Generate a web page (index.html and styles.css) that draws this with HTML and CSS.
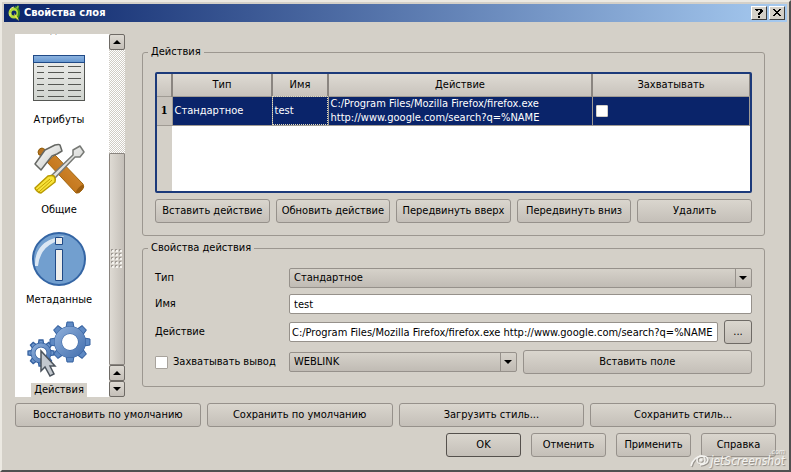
FILE: index.html
```html
<!DOCTYPE html>
<html lang="ru">
<head>
    <meta charset="UTF-8">
    <meta name="viewport" content="width=device-width, initial-scale=1.0">
    <title>Свойства слоя</title>
    <link rel="stylesheet" href="styles.css">
</head>
<body>
    <div class="window">
        <header class="titlebar">
            <svg class="logo" width="16" height="16" viewBox="0 0 16 16">
                <circle cx="6" cy="8" r="4" fill="none" stroke="#b5dc3c" stroke-width="3"/>
                <path d="M7 2q4 1 4 6q0 4-3 6" fill="none" stroke="#3f8a1e" stroke-width="2"/>
                <path d="M2 5q1-3 4-3M2 8v3" fill="none" stroke="#f3f08a" stroke-width="1"/>
                <path d="M8 3l2-3 1 2-2 2z" fill="#8cc63c"/>
                <path d="M6 8l4 5 1 3-4-4z" fill="#e9e04a"/>
            </svg>
            <h1>Свойства слоя</h1>
            <button class="title-button" aria-label="Справка">
                <svg width="10" height="10" viewBox="0 0 10 10" shape-rendering="crispEdges"><path d="M2 1h6v1h1v2h-1v1h-1v1h-1v1h-2v-2h1v-1h1v-2h-2v1h-2v-1h-1v-1h1zM4 8h2v2h-2z"/></svg>
            </button>
            <button class="title-button" aria-label="Закрыть">
                <svg width="10" height="8" viewBox="0 0 10 8" shape-rendering="crispEdges"><path d="M1 0h2v1h1v1h2v-1h1v-1h2v1h-1v1h-1v1h-1v1h1v1h1v1h1v1h-2v-1h-1v-1h-2v1h-1v1h-2v-1h1v-1h1v-1h1v-1h-1v-1h-1v-1h-1z"/></svg>
            </button>
        </header>

        <div class="main">
            <nav class="sidebar">
                <div class="pages">
                    <a class="page" href="#">
                        <span>Подписи</span>
                    </a>
                    <a class="page" href="#">
                        <svg width="64" height="64" viewBox="0 0 64 64">
                            <defs>
                                <linearGradient id="sheet" x1="0" y1="0" x2="0" y2="1"><stop offset="0" stop-color="#eeeeec"/><stop offset="1" stop-color="#d0d4cf"/></linearGradient>
                                <linearGradient id="sheetHead" x1="0" y1="0" x2="0" y2="1"><stop offset="0" stop-color="#8fb5e0"/><stop offset="1" stop-color="#6496d0"/></linearGradient>
                            </defs>
                            <rect x="6.500" y="12.500" width="51" height="45" fill="url(#sheet)" stroke="#555753"/>
                            <rect x="6.500" y="12.500" width="51" height="7" fill="url(#sheetHead)" stroke="#204a87"/>
                            <path d="M10 23.500h7M21 23.500h16M41 23.500h13M10 29.500h7M21 29.500h16M41 29.500h13M10 35.500h7M21 35.500h16M41 35.500h13M10 41.500h7M21 41.500h16M41 41.500h13M10 47.500h7M21 47.500h16M41 47.500h13M10 53.500h7M21 53.500h16M41 53.500h13" stroke="#555753"/>
                        </svg>
                        <span>Атрибуты</span>
                    </a>
                    <a class="page" href="#">
                        <svg width="64" height="64" viewBox="0 0 64 64">
                            <defs>
                                <linearGradient id="steel" x1="0" y1="0" x2="1" y2="1"><stop offset="0" stop-color="#ffffff"/><stop offset="1" stop-color="#c4c6c2"/></linearGradient>
                                <linearGradient id="wood" x1="0" y1="1" x2="1" y2="0"><stop offset="0" stop-color="#b8680c"/><stop offset="1" stop-color="#d8913a"/></linearGradient>
                            </defs>
                            <path d="M12 22l-1-3q1-4 4-4l4 2-5 5z" fill="#b87423" stroke="#8f5902"/>
                            <path d="M20 29l8-7 28 29q2 3-1 6q-3 4-6 3z" fill="url(#wood)" stroke="#a0660f"/>
                            <ellipse cx="53" cy="56" rx="2" ry="5" transform="rotate(42 53 56)" fill="#9c5d10"/>
                            <path d="M8 31l10-14 10-5q4-1 5 0l2 6-5 3-5 2-4 5-7 9z" fill="url(#steel)" stroke="#666864" stroke-width="1.500" stroke-linejoin="round"/>
                            <path d="M25 42l21-20v-5l7-4 4 6-4 5h-5l-20 21z" fill="url(#steel)" stroke="#777975" stroke-width="1.500" stroke-linejoin="round"/>
                            <path d="M8 55l13-12q4-1 6 0q2 3 1 6l-14 11q-2 0-4-2t-2-3z" fill="#f8e33a" stroke="#b99a00" stroke-width="1.500" stroke-linejoin="round"/>
                            <path d="M10 57l13-11M12 59l13-12" stroke="#c4a000"/>
                        </svg>
                        <span>Общие</span>
                    </a>
                    <a class="page" href="#">
                        <svg width="64" height="64" viewBox="0 0 64 64">
                            <circle cx="32" cy="36" r="26" fill="#729fcf" stroke="#3465a4" stroke-width="2"/>
                            <path d="M8 43q-1-26 29-30q-2 3-11 7q-13 6-15 23z" fill="#fff" opacity=".75"/>
                            <path d="M28.500 14.500h7v7h-7zM28.500 26.500h7v31h-7z" fill="#eeeeec" stroke="#204a87"/>
                        </svg>
                        <span>Метаданные</span>
                    </a>
                    <a class="page selected" href="#">
                        <svg width="64" height="64" viewBox="0 0 64 64">
                            <defs>
                                <linearGradient id="gear" gradientUnits="userSpaceOnUse" x1="20" y1="10" x2="60" y2="50"><stop offset="0" stop-color="#9dbce4"/><stop offset="1" stop-color="#3a67a8"/></linearGradient>
                                <linearGradient id="gearSmall" gradientUnits="userSpaceOnUse" x1="0" y1="28" x2="26" y2="54"><stop offset="0" stop-color="#9dbce4"/><stop offset="1" stop-color="#3a67a8"/></linearGradient>
                                <!-- one eighth of a gear: the same tooth is turned round the centre -->
                                <path id="tooth" d="M-4-14l1-6h6l1 6z"/>
                            </defs>
                            <g fill="none">
                                <g transform="translate(14 40) scale(.65)" fill="#6f97cc" stroke="#34609f" stroke-width="2">
                                    <use href="#tooth"/><use href="#tooth" transform="rotate(45)"/><use href="#tooth" transform="rotate(90)"/><use href="#tooth" transform="rotate(135)"/>
                                    <use href="#tooth" transform="rotate(180)"/><use href="#tooth" transform="rotate(225)"/><use href="#tooth" transform="rotate(270)"/><use href="#tooth" transform="rotate(315)"/>
                                </g>
                                <circle cx="14" cy="40" r="8" stroke="#34609f" stroke-width="5"/>
                                <circle cx="14" cy="40" r="8" stroke="url(#gearSmall)" stroke-width="3.500"/>
                                <g transform="translate(43 29)" fill="#5f8ac4" stroke="#34609f">
                                    <use href="#tooth"/><use href="#tooth" transform="rotate(45)"/><use href="#tooth" transform="rotate(90)"/><use href="#tooth" transform="rotate(135)"/>
                                    <use href="#tooth" transform="rotate(180)"/><use href="#tooth" transform="rotate(225)"/><use href="#tooth" transform="rotate(270)"/><use href="#tooth" transform="rotate(315)"/>
                                </g>
                                <circle cx="43" cy="29" r="12" stroke="#34609f" stroke-width="8"/>
                                <circle cx="43" cy="29" r="12" stroke="url(#gear)" stroke-width="7"/>
                            </g>
                            <path d="M14 38v20l4-4 5 9 4-2-4-8h5z" fill="#c3c8ce" stroke="#4b535c" stroke-width="1.500"/>
                        </svg>
                        <span>Действия</span>
                    </a>
                </div>
                <div class="scrollbar">
                    <button class="up" aria-label="Вверх"></button>
                    <div class="track"></div>
                    <div class="thumb"><i></i></div>
                    <button class="up" aria-label="Вверх"></button>
                    <button class="down" aria-label="Вниз"></button>
                </div>
            </nav>

            <div class="content">
                <fieldset class="actions">
                    <legend>Действия</legend>
                    <div class="table-box">
                        <table>
                            <colgroup>
                                <col class="col-num">
                                <col class="col-type">
                                <col class="col-name">
                                <col class="col-action">
                                <col>
                            </colgroup>
                            <thead>
                                <tr><th></th><th>Тип</th><th>Имя</th><th>Действие</th><th>Захватывать</th></tr>
                            </thead>
                            <tbody>
                                <tr>
                                    <th>1</th>
                                    <td>Стандартное</td>
                                    <td class="focused">test</td>
                                    <td>C:/Program Files/Mozilla Firefox/firefox.exe http://www.google.com/search?q=%NAME</td>
                                    <td><input type="checkbox" aria-label="Захватывать"></td>
                                </tr>
                            </tbody>
                        </table>
                    </div>
                    <div class="buttons action-buttons">
                        <button>Вставить действие</button>
                        <button>Обновить действие</button>
                        <button>Передвинуть вверх</button>
                        <button>Передвинуть вниз</button>
                        <button>Удалить</button>
                    </div>
                </fieldset>

                <fieldset class="properties">
                    <legend>Свойства действия</legend>
                    <div class="row">
                        <label for="type">Тип</label>
                        <div class="combo">
                            <select id="type"><option>Стандартное</option></select>
                        </div>
                    </div>
                    <div class="row">
                        <label for="name">Имя</label>
                        <input type="text" id="name" value="test">
                    </div>
                    <div class="row">
                        <label for="action">Действие</label>
                        <input class="path" type="text" id="action" value="C:/Program Files/Mozilla Firefox/firefox.exe http://www.google.com/search?q=%NAME">
                        <button class="browse">...</button>
                    </div>
                    <div class="row">
                        <label class="check"><input type="checkbox"> Захватывать вывод</label>
                        <div class="combo">
                            <select aria-label="Поле"><option>WEBLINK</option></select>
                        </div>
                        <button class="insert">Вставить поле</button>
                    </div>
                </fieldset>
            </div>
        </div>

        <div class="buttons style-buttons">
            <button>Восстановить по умолчанию</button>
            <button>Сохранить по умолчанию</button>
            <button>Загрузить стиль...</button>
            <button>Сохранить стиль...</button>
        </div>
        <div class="dialog-buttons">
            <button class="default">OK</button>
            <button>Отменить</button>
            <button>Применить</button>
            <button>Справка</button>
        </div>

        <div class="watermark">
            <svg width="20" height="14" viewBox="0 0 20 14" fill="none" stroke="#f4f3f0" stroke-width="1.500">
                <path d="M1 12q2-9 11-10q5 0 6 3q0 5-8 6"/>
                <circle cx="11" cy="6" r="4"/>
                <circle cx="11" cy="6" r="1"/>
            </svg>
            <span>jetScreenshot</span>
            <small>.com</small>
        </div>
    </div>
</body>
</html>
```
FILE: styles.css
```css
* {
    box-sizing: border-box;
}
body {
    margin: 0;
    background: #d4d0c8;
    color: #000;
    font-family: "DejaVu Sans Condensed", "DejaVu Sans", sans-serif;
    font-size: 11px;
    line-height: 14px;
}
button, input, select {
    font: inherit;
    color: inherit;
    margin: 0;
}
.window {
    position: relative;
    display: flex;
    flex-direction: column;
    min-height: 100vh;
    padding: 2px 2px 13px;
    border: 2px solid;
    border-color: #ece9e2 #505050 #505050 #ece9e2;
}

/* title bar */
.titlebar {
    display: flex;
    align-items: center;
    height: 18px;
    padding: 0 2px 0 4px;
    background: linear-gradient(to right, #0a246a, #a6caf0);
}
.titlebar h1 {
    flex: 1;
    margin: 0;
    color: #fff;
    font-size: 11px;
    line-height: 18px;
}
.title-button {
    display: flex;
    align-items: center;
    justify-content: center;
    width: 16px;
    height: 14px;
    margin-left: 2px;
    padding: 0;
    background: #d4d0c8;
    border: 1px solid;
    border-color: #fff #404040 #404040 #fff;
}

.main {
    display: flex;
    flex: 1;
    padding: 12px 22px 0 11px;
}

/* list of pages */
.sidebar {
    display: flex;
    width: 110px;
}
.pages {
    display: flex;
    flex: 1;
    flex-direction: column;
    justify-content: flex-end;
    overflow: hidden;
    contain: size;
    background: #fff;
}
.page {
    display: flex;
    flex-direction: column;
    align-items: center;
    justify-content: flex-end;
    flex: none;
    height: 90px;
    padding-right: 6px;
    color: #000;
    text-decoration: none;
}
.page svg {
    margin-bottom: 6px;
}
.page span {
    padding: 0 3px;
}
.selected span {
    background: #d4d0c8;
}
.scrollbar {
    display: flex;
    flex-direction: column;
    width: 16px;
}
.scrollbar button {
    display: flex;
    align-items: center;
    justify-content: center;
    height: 16px;
    padding: 0;
    border: 1px solid #6e6a65;
    border-radius: 2px;
    background: linear-gradient(#dedad3, #c4bfb8);
}
.scrollbar button::before {
    content: "";
    border: 4px solid transparent;
}
.scrollbar .up::before {
    border-top: 0;
    border-bottom-color: #000;
}
.scrollbar .down::before {
    border-bottom: 0;
    border-top-color: #000;
}
.track {
    flex: 104;
    background: repeating-conic-gradient(#fff 0 25%, #d0ccc4 0 50%) 0 0 / 2px 2px;
}
.thumb {
    display: flex;
    flex: 211;
    align-items: center;
    justify-content: center;
    border: 1px solid #8a8580;
    border-radius: 1px;
    background: linear-gradient(to right, #dedad3, #c4bfb8);
}
.thumb i {
    width: 12px;
    height: 20px;
    background: radial-gradient(circle at 1px 1px, #f4f2ee 1px, transparent 1px) 1px 1px / 4px 4px,
        radial-gradient(circle at 1px 1px, #a09b95 1px, transparent 1px) 0 0 / 4px 4px;
}

/* group boxes */
.content {
    display: flex;
    flex: 1;
    flex-direction: column;
    gap: 5px;
    min-width: 0;
    padding: 11px 0 10px 17px;
}
fieldset {
    min-width: 0;
    margin: 0;
    padding: 13px 12px 12px;
    border: 1px solid #9c9790;
    border-radius: 3px;
}
legend {
    margin-left: -7px;
    padding: 0 3px;
}
.actions {
    display: flex;
    flex: 1;
    flex-direction: column;
}
.table-box {
    flex: 1;
    min-height: 119px;
    border: 2px solid #1c3a7a;
    border-radius: 2px;
    background: linear-gradient(to right, #d4d0c8 15px, #fff 15px);
}
table {
    width: 100%;
    table-layout: fixed;
    border-collapse: collapse;
}
.col-num {
    width: 15px;
}
.col-type {
    width: 100px;
}
.col-name {
    width: 56px;
}
.col-action {
    width: 264px;
}
th, td {
    padding: 0 2px;
    border: 1px solid #a09b94;
    border-width: 0 1px 1px 0;
}
thead th {
    height: 22px;
    border-right: 2px solid #8a8580;
    background: linear-gradient(#dedad3, #c8c3bc);
    font-weight: normal;
}
thead th:last-child {
    border-right-width: 1px;
}
tbody th {
    height: 29px;
    background: #c8c3bc;
    font-family: "DejaVu Serif Condensed", "DejaVu Serif", serif;
}
td {
    background: #0a246a;
    color: #fff;
}
td.focused {
    outline: 1px dotted #e0dcc0;
    outline-offset: -1px;
}
input[type="checkbox"] {
    appearance: none;
    display: block;
    width: 13px;
    height: 13px;
    border: 1px solid #a8a39c;
    border-radius: 1px;
    background: #fff;
}
td input[type="checkbox"] {
    width: 12px;
    height: 12px;
    margin-left: 1px;
    border-color: #d4d0c8;
}

/* buttons */
.buttons, .dialog-buttons {
    display: flex;
    gap: 6px;
}
.buttons button, .dialog-buttons button, .insert, .browse {
    height: 24px;
    padding: 0;
    border: 1px solid #96918b;
    border-radius: 3px;
    background: linear-gradient(#dad6ce, #c4bfb8);
    white-space: nowrap;
}
.buttons button {
    flex: 1 1 0;
}
.action-buttons {
    margin-top: 6px;
}
.style-buttons {
    padding: 6px 11px 0;
}
.dialog-buttons {
    justify-content: flex-end;
    gap: 10px;
    padding: 6px 11px 0;
}
.dialog-buttons button {
    width: 75px;
}
.dialog-buttons .default {
    border-color: #55514d;
}

/* action properties */
.properties {
    display: flex;
    flex-direction: column;
    gap: 6px;
}
.row {
    display: flex;
    align-items: center;
    gap: 6px;
}
.row > label {
    flex: none;
    width: 128px;
}
.row .check {
    display: flex;
    align-items: center;
    gap: 5px;
}
.combo {
    position: relative;
    flex: 1 1 0;
}
select, input[type="text"] {
    display: block;
    width: 100%;
    height: 20px;
    padding: 0 4px;
    border: 1px solid #96918b;
    border-radius: 2px;
}
select {
    appearance: none;
    background: linear-gradient(#d6d2ca, #c0bbb4);
}
.combo::before {
    content: "";
    position: absolute;
    top: 1px;
    right: 16px;
    bottom: 1px;
    border-left: 1px solid #96918b;
    pointer-events: none;
}
.combo::after {
    content: "";
    position: absolute;
    top: 8px;
    right: 5px;
    border: 4px solid transparent;
    border-top-color: #000;
    border-bottom: 0;
    pointer-events: none;
}
input[type="text"] {
    flex: 1;
    min-width: 0;
    background: #fff;
}
input.path {
    padding: 0 2px;
}
.browse {
    width: 28px;
    border-color: #6e6a65;
}
.insert {
    flex: 1 1 0;
}

.watermark {
    position: absolute;
    right: 4px;
    bottom: 2px;
    display: flex;
    align-items: center;
    color: #f4f3f0;
    font-size: 12px;
    font-style: italic;
    text-shadow: 1px 1px 1px #88847e;
}
.watermark svg {
    filter: drop-shadow(1px 1px 0 #99958f);
}
.watermark small {
    position: absolute;
    top: -6px;
    right: 0;
    font-size: 7px;
    line-height: 8px;
}
```
